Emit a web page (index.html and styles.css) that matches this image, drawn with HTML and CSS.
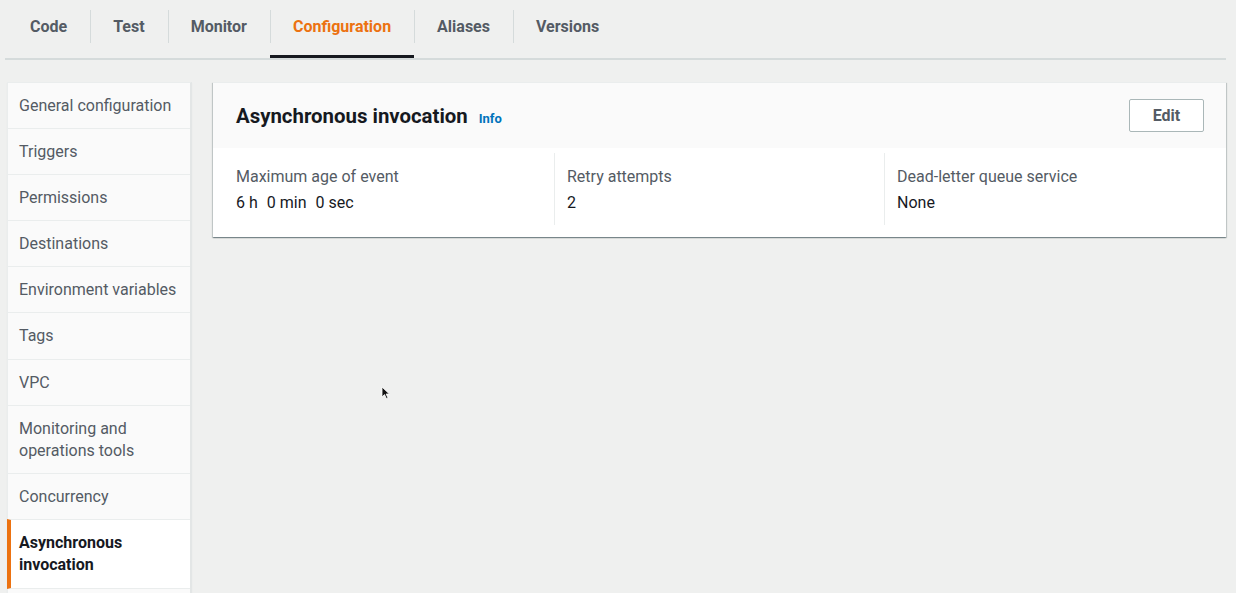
FILE: index.html
```html
<!DOCTYPE html>
<html lang="en">
<head>
<meta charset="utf-8">
<title>Configuration - Asynchronous invocation</title>
<link rel="stylesheet" href="styles.css">
</head>
<body>
<div class="page">
  <nav class="tabs">
    <a class="tab">Code</a>
    <a class="tab">Test</a>
    <a class="tab">Monitor</a>
    <a class="tab active">Configuration</a>
    <a class="tab">Aliases</a>
    <a class="tab">Versions</a>
  </nav>
  <div class="main">
    <ul class="side">
      <li class="side-item">General configuration</li>
      <li class="side-item">Triggers</li>
      <li class="side-item">Permissions</li>
      <li class="side-item">Destinations</li>
      <li class="side-item">Environment variables</li>
      <li class="side-item tall">Tags</li>
      <li class="side-item">VPC</li>
      <li class="side-item">Monitoring and<br>operations tools</li>
      <li class="side-item">Concurrency</li>
      <li class="side-item active tall">Asynchronous<br>invocation</li>
    </ul>
    <div class="content">
      <section class="card">
        <header class="card-head">
          <h2 class="card-title">Asynchronous invocation <a class="info">Info</a></h2>
          <button class="btn">Edit</button>
        </header>
        <div class="card-body">
          <div class="col">
            <div class="label">Maximum age of event</div>
            <div class="value"><span class="part">6 h</span><span class="part">0 min</span><span class="part">0 sec</span></div>
          </div>
          <div class="col">
            <div class="label">Retry attempts</div>
            <div class="value">2</div>
          </div>
          <div class="col">
            <div class="label">Dead-letter queue service</div>
            <div class="value">None</div>
          </div>
        </div>
      </section>
      <svg class="cursor" width="10" height="14" viewBox="0 0 10 14"><path d="M1 1 L1 11 L3.5 8.6 L5.4 12.6 L7 11.9 L5.1 8 L8.4 8 Z" fill="#111" stroke="#fff" stroke-width="0.8"/></svg>
    </div>
  </div>
</div>
</body>
</html>
```

FILE: styles.css
```css
* { box-sizing: border-box; }
html, body { margin: 0; padding: 0; }
body {
  background: #eff0ef;
  font-family: Roboto, "Liberation Sans", Arial, sans-serif;
  color: #16191f;
  height: 593px;
  overflow: hidden;
}
.page {
  width: 1221px;
  margin-left: 5px;
}
.tabs {
  display: flex;
  border-bottom: 2px solid #d5dbdb;
  height: 60px;
}
.tab {
  position: relative;
  padding: 0 23px 5px;
  height: 58px;
  display: flex;
  align-items: center;
  font-size: 16px;
  font-weight: 700;
  color: #545b64;
}
.tab:first-child { padding-left: 25px; }
.tab.active {
  color: #ec7211;
  box-shadow: inset 0 -3px 0 #16191f;
}
.tab + .tab::before {
  content: "";
  position: absolute;
  left: 0;
  top: 10px;
  height: 33px;
  width: 1px;
  background: #d5dbdb;
}
.main {
  display: flex;
  gap: 21px;
  margin-top: 22px;
  padding-left: 2px;
}
.side {
  list-style: none;
  margin: 0;
  padding: 0 0 40px;
  width: 185px;
  flex: none;
  background: #fafafa;
  border: 1px solid #eaeded;
  border-right: 2px solid #e3e6e6;
  box-shadow: 0 1px 1px rgba(0,0,0,0.05);
}
.side-item {
  padding: 12px 11px 11px;
  font-size: 16px;
  line-height: 22px;
  color: #545b64;
  border-top: 1px solid #eaeded;
}
.side-item.tall { padding-bottom: 12px; }
.side-item:first-child { border-top: none; }
.side-item.active {
  background: #fff;
  color: #16191f;
  font-weight: 700;
  border-left: 4px solid #ec7211;
  border-bottom: 1px solid #eaeded;
  padding-left: 8px;
  margin-left: -1px;
}
.content {
  flex: 1;
  position: relative;
}
.card {
  background: #fff;
  box-shadow: 0 1px 1px rgba(0,28,36,0.3), 1px 1px 1px rgba(0,28,36,0.15), -1px 1px 1px rgba(0,28,36,0.15);
}
.card-head {
  background: #fafafa;
  height: 66px;
  display: flex;
  align-items: center;
  justify-content: space-between;
  padding: 0 22px 0 23px;
  border-top: 1px solid #eaeded;
}
.card-title {
  margin: 0;
  font-size: 20.4px;
  font-weight: 700;
  color: #16191f;
  display: flex;
  align-items: baseline;
  gap: 11px;
}
.info {
  font-size: 13px;
  font-weight: 700;
  color: #0073bb;
}
.btn {
  width: 75px;
  height: 33px;
  background: #fff;
  border: 1px solid #aab7b8;
  border-radius: 2px;
  font-family: inherit;
  font-size: 16px;
  font-weight: 700;
  color: #545b64;
  margin-top: -1px;
}
.card-body {
  display: grid;
  grid-template-columns: 330px 330px 1fr;
  padding: 5px 12px 12px 11px;
}
.col {
  padding: 13px 12px 11px;
  border-left: 1px solid #eaeded;
}
.col:first-child { border-left: none; }
.label {
  font-size: 16px;
  line-height: 22px;
  color: #545b64;
  margin-bottom: 4px;
}
.value {
  font-size: 16px;
  line-height: 22px;
  color: #16191f;
}
.part { margin-right: 9px; }
.cursor {
  position: absolute;
  left: 168px;
  top: 304px;
}
```
